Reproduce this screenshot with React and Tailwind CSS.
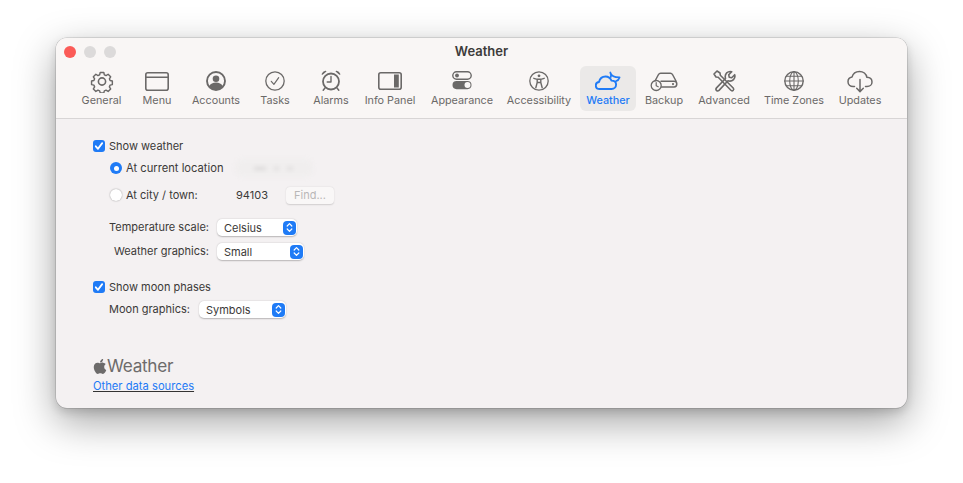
import React from "react";
import { FaApple } from "react-icons/fa";

const S = ({ children, w = 24, h = 24 }) => (
  <svg width={w} height={h} viewBox={`0 0 ${w} ${h}`} fill="none" stroke="currentColor" strokeWidth="1.600" strokeLinecap="round" strokeLinejoin="round">{children}</svg>
);

const Gear = () => (
  <S>
    <path d="M10 2.500h4l.6 2.600 1.900.8 2.300-1.400 2.800 2.800-1.400 2.300.8 1.900 2.500.5v4l-2.500.6-.8 1.900 1.400 2.300-2.800 2.800-2.300-1.400-1.900.8-.6 2.200h-4l-.6-2.200-1.900-.8-2.300 1.400-2.800-2.800 1.400-2.300-.8-1.900-2.600-.6v-4l2.600-.5.8-1.900-1.400-2.300 2.800-2.800 2.300 1.400 1.900-.8z" transform="translate(1.200 1.200) scale(.9)" />
    <circle cx="12" cy="12.500" r="3.600" />
  </S>
);
const MenuI = () => (
  <S>
    <rect x="0.800" y="3.800" width="22.400" height="17.400" rx="2" />
    <path d="M1 8.200h22" />
  </S>
);
const Account = () => (
  <S w={20} h={20}>
    <circle cx="10" cy="10" r="9" strokeWidth="1.900" />
    <circle cx="10" cy="7.800" r="3.300" fill="currentColor" stroke="none" />
    <path d="M3.200 15.200c1.200-2.500 3.800-3.700 6.800-3.700s5.600 1.200 6.800 3.700c-1.500 2.200-4 3.800-6.800 3.800s-5.300-1.600-6.800-3.800z" fill="currentColor" stroke="none" />
  </S>
);
const Tasks = () => (
  <S w={20} h={20}>
    <circle cx="10" cy="10" r="9.200" strokeWidth="1.300" />
    <path d="M6.300 10.300l2.600 3 4.800-6.600" strokeWidth="1.200" />
  </S>
);
const Alarm = () => (
  <S w={20} h={24}>
    <circle cx="10" cy="12.500" r="8" strokeWidth="1.800" />
    <path d="M10 7.500v5.500h-3.800" strokeWidth="1.400" />
    <path d="M1.200 5.200c.6-1.700 2-2.700 3.600-2.900zM18.800 5.200c-.6-1.700-2-2.700-3.600-2.900z" fill="currentColor" strokeWidth="1.200" />
    <path d="M4 19l-1.800 2.200M16 19l1.800 2.200" strokeWidth="1.500" />
  </S>
);
const Panel = () => (
  <S>
    <rect x="0.800" y="3.800" width="22.400" height="16.400" rx="2" />
    <rect x="16" y="5.500" width="4.800" height="13" fill="currentColor" stroke="none" />
  </S>
);
const Appearance = () => (
  <S w={20} h={24}>
    <rect x="0.800" y="2.800" width="18.400" height="7.400" rx="3.700" strokeWidth="1.400" />
    <circle cx="5" cy="6.500" r="1.900" fill="currentColor" stroke="none" />
    <rect x="0.500" y="12" width="19" height="8.200" rx="4.100" fill="currentColor" stroke="none" />
    <circle cx="15.500" cy="16.100" r="3" fill="#f9f6f5" stroke="none" />
  </S>
);
const Access = () => (
  <S w={20} h={20}>
    <circle cx="10" cy="10" r="9.200" strokeWidth="1.300" />
    <circle cx="10" cy="4.800" r="1.400" fill="currentColor" stroke="none" />
    <path d="M4.800 7.300l3.400 1v3.200l-1.400 5.200M15.200 7.300l-3.400 1v3.200l1.400 5.200M8.200 8.300h3.600M8.200 11.500h3.600" strokeWidth="1.400" />
  </S>
);
const WeatherI = () => (
  <S w={26} h={20}>
    <path d="M4.600 18c-2.200 0-3.800-1.500-3.800-3.500 0-1.900 1.400-3.300 3.200-3.500.8-3.300 3.400-5.500 6.500-5.500 2.900 0 5 1.700 6 4.100 3.100.1 4.600 1.800 4.600 3.900 0 2.400-1.800 4.500-4.600 4.500z" strokeWidth="1.900" />
    <path d="M15.300 1.500c.9 2.900 3.600 5 9.300 4.900-.6 1.900-1.900 3.300-3.800 3.900M15.300 1.500c.8 1.500.9 3.200.5 4.600" strokeWidth="1.700" />
  </S>
);
const Backup = () => (
  <S w={28} h={22}>
    <path d="M5 11l3.500-6.500c.5-.9 1.100-1.300 2.100-1.300h9.800c1 0 1.600.4 2.100 1.300L26 11" strokeWidth="1.500" />
    <path d="M11 11.300h13.200c1.500 0 2.600 1.100 2.600 2.700s-1.100 2.900-2.600 2.900H11.500" strokeWidth="1.500" />
    <circle cx="23" cy="14.100" r="1.100" fill="currentColor" stroke="none" />
    <circle cx="6.200" cy="15.500" r="5" strokeWidth="1.300" />
    <path d="M6.200 12.500v3.200l2 1.100" strokeWidth="1.200" />
  </S>
);
const Tools = () => (
  <S w={24} h={24}>
    <path d="M2 5l3-3 3 2 .3 2.200L21.200 19c.8.900.8 1.500 0 2.300-.9.800-1.500.8-2.300 0L6.200 8.300 4 8z" strokeWidth="1.600" />
    <path d="M13.500 9.500c-.6-2.200-.1-4.300 1.200-5.600 1.400-1.300 3.200-1.700 5-1.200l-3 3 .5 2.500 2.500.5 3-3c.5 1.800.1 3.600-1.200 4.900-1.300 1.300-3.300 1.800-5.500 1.200l-9 9.600c-.9.800-1.700.8-2.500 0-.8-.8-.8-1.600 0-2.500z" strokeWidth="1.600" />
  </S>
);
const Globe = () => (
  <S w={20} h={20}>
    <circle cx="10" cy="10" r="9.200" strokeWidth="1.400" />
    <ellipse cx="10" cy="10" rx="4.300" ry="9.200" strokeWidth="1.100" />
    <path d="M10 .8v18.400M.8 10h18.400M2.200 5.300h15.600M2.200 14.700h15.600" strokeWidth="1.100" />
  </S>
);
const Cloud = () => (
  <S w={26} h={24}>
    <path d="M7.500 17.500H6.200c-3 0-5.200-2-5.200-4.800 0-2.400 1.700-4.200 4-4.600C6 4.600 9 2.500 12.500 2.500c3.800 0 6.700 2.600 7.400 5.800 3 .2 5.100 2 5.100 4.600 0 2.700-2.100 4.600-5 4.600h-1.500" strokeWidth="1.500" />
    <path d="M13 10.500v12M9.700 19.300L13 22.600l3.300-3.300" strokeWidth="1.500" />
  </S>
);

const tabs = [
  ["General", Gear, "w-[55px] text-[#6b6968]"],
  ["Menu", MenuI, "w-[56px] text-[#6b6968]"],
  ["Accounts", Account, "w-[62px] text-[#6b6968]"],
  ["Tasks", Tasks, "w-[56px] text-[#6b6968]"],
  ["Alarms", Alarm, "w-[56px] text-[#6b6968]"],
  ["Info Panel", Panel, "w-[62px] text-[#6b6968]"],
  ["Appearance", Appearance, "w-[82px] text-[#6b6968]"],
  ["Accessibility", Access, "w-[72px] text-[#6b6968]"],
  ["Weather", WeatherI, "w-[56px] ml-[5px] bg-[#ebe9e8] text-[#1f7bf6] font-medium"],
  ["Backup", Backup, "w-[56px] text-[#6b6968]"],
  ["Advanced", Tools, "w-[64px] text-[#6b6968]"],
  ["Time Zones", Globe, "w-[76px] text-[#6b6968]"],
  ["Updates", Cloud, "w-[56px] text-[#6b6968]"],
];

const Check = () => (
  <span className="flex h-[12px] w-[12px] shrink-0 items-center justify-center rounded-[3px] bg-[#1f7bf6]">
    <svg width="10" height="10" viewBox="0 0 10 10" fill="none" stroke="#fff" strokeWidth="1.800" strokeLinecap="round" strokeLinejoin="round"><path d="M1.800 5.300l2.200 2.500 4.200-5.700" /></svg>
  </span>
);

const Select = ({ value, w }) => (
  <span className={`flex h-[17px] items-center justify-between rounded-[5px] bg-white pl-[7px] pr-[1px] shadow-[0_0.5px_1.5px_rgba(0,0,0,0.25)] ${w}`}>
    <span className="relative top-[1px]">{value}</span>
    <span className="flex h-[14px] w-[13px] items-center justify-center rounded-[4px] bg-[#1f7bf6]">
      <svg width="7" height="11" viewBox="0 0 7 11" fill="none" stroke="#fff" strokeWidth="1.200" strokeLinecap="round" strokeLinejoin="round"><path d="M1.200 4l2.300-2.300L5.800 4M1.200 7l2.300 2.300L5.800 7" /></svg>
    </span>
  </span>
);

export default function App() {
  return (
    <div className="h-[483px] w-[963px] overflow-hidden bg-white pl-[56px] pt-[38px] font-['Inter',sans-serif] text-[11px] text-[#3b3938]">
      <div className="flex h-[370px] w-[851px] flex-col overflow-hidden rounded-[11px] bg-[#f4f1f2] shadow-[0_0_0_0.5px_rgba(0,0,0,0.2),0_14px_40px_rgba(0,0,0,0.36),0_4px_10px_rgba(0,0,0,0.14)]">
        <header className="h-[81px] shrink-0 border-b border-[#d8d5d5] bg-[#f9f6f5]">
          <div className="relative h-[28px]">
            <div className="absolute left-[8px] top-[8px] flex gap-[8px]">
              <span className="h-[12px] w-[12px] rounded-full bg-[#fb5b57]" />
              <span className="h-[12px] w-[12px] rounded-full bg-[#dcdada]" />
              <span className="h-[12px] w-[12px] rounded-full bg-[#dcdada]" />
            </div>
            <div className="pt-[4px] text-center text-[13px] font-semibold leading-[18px] text-[#3d3b3a]">Weather</div>
          </div>
          <nav className="flex pl-[18px]">
            {tabs.map(([name, Icon, cls]) => (
              <div key={name} className={`flex h-[45px] flex-col items-center rounded-[6px] ${cls}`}>
                <div className="flex h-[29px] items-center justify-center"><Icon /></div>
                <span className="-mt-[1px] whitespace-nowrap text-[10.8px] leading-[14px]">{name}</span>
              </div>
            ))}
          </nav>
        </header>
        <main className="flex flex-col pl-[37px] pt-[20px]">
          <label className="flex h-[14px] items-center gap-[4px]"><Check />Show weather</label>
          <div className="mt-[8px] flex h-[14px] items-center gap-[4px] pl-[17px]">
            <span className="flex h-[12px] w-[12px] items-center justify-center rounded-full bg-[#1f7bf6]"><span className="h-[5px] w-[5px] rounded-full bg-white" /></span>
            <span className="text-[11.2px]">At current location</span>
            <span className="ml-[7px] flex h-[18px] w-[78px] items-center justify-center gap-[8px] rounded-[8px] bg-[#f0eeee] blur-[2px]">
              <span className="h-[3px] w-[12px] bg-[#d9d7d7]" />
              <span className="h-[3px] w-[5px] bg-[#dedcdc]" />
              <span className="h-[3px] w-[6px] bg-[#dedcdc]" />
            </span>
          </div>
          <div className="mt-[13px] flex h-[14px] items-center pl-[17px]">
            <span className="h-[12px] w-[12px] rounded-full bg-white shadow-[0_0_1.5px_rgba(0,0,0,0.45)]" />
            <span className="ml-[4px] w-[110px]">At city / town:</span>
            <span className="w-[49px]">94103</span>
            <span className="ml-[1px] flex h-[17px] w-[48px] items-center justify-center rounded-[4px] bg-[#f9f7f7] text-[#b9b7b7] shadow-[0_0.5px_1.5px_rgba(0,0,0,0.15)]">Find...</span>
          </div>
          <div className="mt-[17px] flex items-center">
            <span className="w-[116px] text-right">Temperature scale:</span>
            <span className="ml-[8px]"><Select value="Celsius" w="w-[80px]" /></span>
          </div>
          <div className="mt-[7px] flex items-center">
            <span className="w-[116px] text-right">Weather graphics:</span>
            <span className="ml-[8px]"><Select value="Small" w="w-[87px]" /></span>
          </div>
          <label className="mt-[20px] flex h-[14px] items-center gap-[4px]"><Check />Show moon phases</label>
          <div className="ml-[16px] mt-[7px] flex items-center">
            <span>Moon graphics:</span>
            <span className="ml-[9px]"><Select value="Symbols" w="w-[87px]" /></span>
          </div>
          <div className="mt-[38px] flex h-[20px] items-center text-[17.200px] leading-[20px] text-[#6d6b6b]">
            <FaApple className="h-[17px] w-[14px]" />
            <span className="tracking-[-0.3px]">Weather</span>
          </div>
          <a className="mt-[3px] w-fit text-[11.2px] leading-[14px] text-[#1f7bf6] underline decoration-[#333]">Other data sources</a>
        </main>
      </div>
    </div>
  );
}
